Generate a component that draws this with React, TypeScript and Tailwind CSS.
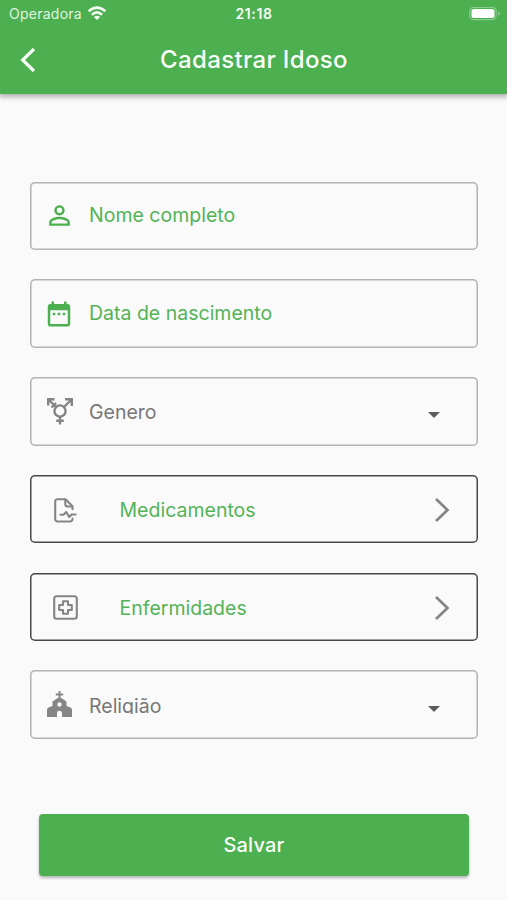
import type { ReactNode } from 'react';
import { MdPersonOutline, MdDateRange } from 'react-icons/md';

function FieldBox({ dark = false, children }: { dark?: boolean; children: ReactNode }) {
  return (
    <div
      className={
        'flex h-[68.5px] w-full shrink-0 items-center rounded-[5px] pr-[2px] pl-px ' +
        (dark
          ? 'shadow-[inset_0_0_0_1.5px_#48484a]'
          : 'shadow-[inset_0_0_0_1.5px_#b3b3b3]')
      }
    >
      {children}
    </div>
  );
}

function Caret() {
  return (
    <svg className="mt-2 mr-[36px] ml-auto h-[6px] w-[12px]" viewBox="0 0 12 6">
      <path d="M0 0h12L6 6z" fill="#5c5c5c" />
    </svg>
  );
}

function Chevron() {
  return (
    <svg className="mt-0.5 mr-[26px] ml-auto h-[26px] w-[16px]" viewBox="0 0 16 26" fill="none">
      <path d="M2 2l11.5 11L2 24" stroke="#858585" strokeWidth="2.7" />
    </svg>
  );
}

function WifiIcon() {
  return (
    <svg className="ml-[5px] h-[15px] w-[20px]" viewBox="0 0 20 15" fill="none" stroke="#f4fbf4" strokeWidth="2.6">
      <path d="M1.6 5.2Q10-2 18.4 5.2" />
      <path d="M4.9 8.7Q10 4.2 15.1 8.7" />
      <path d="M10 14L6.9 10.9Q10 8.4 13.1 10.9z" fill="#f4fbf4" stroke="none" />
    </svg>
  );
}

function GenderIcon() {
  return (
    <svg className="h-[27px] w-[26px]" viewBox="0 0 26 27" fill="none" stroke="#858585" strokeWidth="2.4">
      <circle cx="13" cy="13" r="5.6" />
      <path d="M17 9L24 2M18 1.3h6.800v6.800" />
      <path d="M9 9L2 2M7.500 1.300H1.200v6.300M4.500 9.500l4.500-4.500" />
      <path d="M13 18.500v8M9.200 22.800h7.600" />
    </svg>
  );
}

function DocumentIcon() {
  return (
    <svg className="h-[25px] w-[23px]" viewBox="0 0 23 25" fill="none" stroke="#858585" strokeWidth="2.1" strokeLinejoin="round" strokeLinecap="round">
      <path d="M18.5 20.5v.8a2.2 2.2 0 0 1-2.2 2.2H3.4A2.2 2.2 0 0 1 1.2 21.300V3.400A2.200 2.200 0 0 1 3.400 1.200h8.200l6.900 7v3" />
      <path d="M11.300 1.500v4.500a2.500 2.500 0 0 0 2.500 2.500h4.500" />
      <path d="M6.500 16.800h3l2.700-2.800 3 5 2.400-2.500h4" />
    </svg>
  );
}

function MedicalBoxIcon() {
  return (
    <svg className="h-[25px] w-[25px]" viewBox="0 0 25 25" fill="none" stroke="#858585" strokeWidth="2.1" strokeLinejoin="round">
      <rect x="1.200" y="1.200" width="22.600" height="22.600" rx="2.500" />
      <path d="M10 6.200h5v3.800h3.800v5H15v3.800h-5V15H6.200v-5H10z" />
    </svg>
  );
}

function ChurchIcon() {
  return (
    <svg className="h-[26px] w-[25px]" viewBox="0 0 25 26" fill="#858585">
      <path
        fillRule="evenodd"
        d="M11.500 0h2v2.600h2.700v2h-2.700v2.500h.8l5.200 3.300v4.600l3.500 1.200q2 .8 2 2.500V26H15v-3.700a2.500 2.500 0 0 0-5 0V26H0v-7.300q0-1.700 2-2.500l3.500-1.200v-4.600l5.200-3.300h.8V4.600H8.800v-2h2.700zM12.500 11.300a2.200 2.200 0 1 0 0 4.400a2.200 2.200 0 0 0 0-4.400z"
      />
    </svg>
  );
}

export default function App() {
  return (
    <div className="flex h-[900px] w-[507px] flex-col overflow-hidden bg-[#fafafa] font-['Inter','Liberation_Sans',sans-serif]">
      <header className="h-[93.5px] shrink-0 bg-[#4caf50] text-[#f8fdf8] shadow-[0_2px_5px_1px_rgba(0,0,0,0.3)]">
        <div className="grid h-[27px] grid-cols-3 items-center pr-[6px] pl-[9px]">
          <div className="flex items-center">
            <span className="text-[14px] tracking-[0.25px] text-[#e0f3e0]">Operadora</span>
            <WifiIcon />
          </div>
          <span className="pr-[2px] text-center text-[14px] font-semibold tracking-[0.6px]">21:18</span>
          <svg className="ml-auto h-[14px] w-[32px]" viewBox="0 0 32 14">
            <rect x="0.800" y="0.300" width="26.400" height="12.400" rx="4" fill="none" stroke="#8bcc8e" strokeWidth="1.200" />
            <rect x="2.500" y="2" width="23" height="9" rx="2.500" fill="#fff" />
            <path d="M29 4.500v4q2-.6 2-2t-2-2z" fill="#8bcc8e" />
          </svg>
        </div>
        <div className="grid h-[66px] grid-cols-[60px_1fr_60px] items-center">
          <svg className="ml-[20px] h-[25px] w-[16px]" viewBox="0 0 16 25" fill="none">
            <path d="M14 1L2.600 12L14 23" stroke="#f8fdf8" strokeWidth="3.200" />
          </svg>
          <h1 className="pl-px text-center text-[24px] font-medium tracking-[0.35px]">Cadastrar Idoso</h1>
        </div>
      </header>
      <main className="flex flex-1 flex-col gap-[29.3px] pt-[88px] pr-[29px] pl-[30px] text-[19.5px]">
        <FieldBox>
          <MdPersonOutline className="ml-[13px] size-[31px] text-[#4caf50]" />
          <span className="ml-[14px] text-[#53b357]">Nome completo</span>
        </FieldBox>
        <FieldBox>
          <MdDateRange className="ml-[13px] size-[30px] text-[#4caf50]" />
          <span className="ml-[15px] text-[#53b357]">Data de nascimento</span>
        </FieldBox>
        <FieldBox>
          <div className="ml-[16px] w-[42px]"><GenderIcon /></div>
          <span className="pt-[2px] text-[#777]">Genero</span>
          <Caret />
        </FieldBox>
        <FieldBox dark>
          <div className="ml-[23px] w-[65.5px] pt-[2px]"><DocumentIcon /></div>
          <span className="pt-[3px] text-[#53b357]">Medicamentos</span>
          <Chevron />
        </FieldBox>
        <FieldBox dark>
          <div className="ml-[22px] w-[66.500px] pt-[2px]"><MedicalBoxIcon /></div>
          <span className="pt-[3px] text-[#53b357]">Enfermidades</span>
          <Chevron />
        </FieldBox>
        <FieldBox>
          <div className="ml-[16px] w-[42px] pb-[2px]"><ChurchIcon /></div>
          <span className="mb-[2px] h-[20px] overflow-hidden leading-[24px] text-[#777]">Religião</span>
          <Caret />
        </FieldBox>
        <button className="mx-[9px] mt-[46px] h-[61.5px] shrink-0 rounded-[4px] bg-[#4caf50] text-[20px] font-medium tracking-[0.2px] text-[#f8fdf8] shadow-[0_2px_3px_rgba(0,0,0,0.28)]">
          Salvar
        </button>
      </main>
    </div>
  );
}
